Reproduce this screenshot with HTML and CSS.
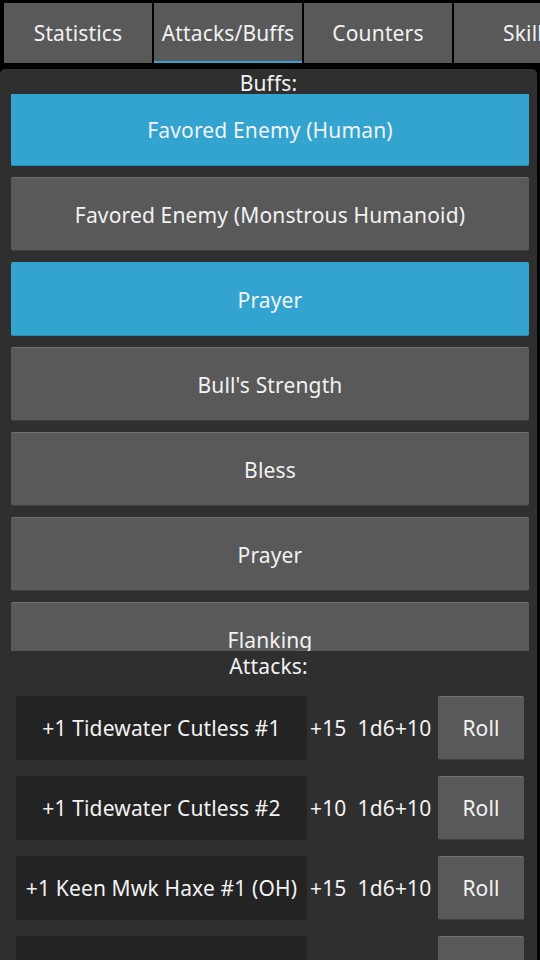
FILE: index.html
```html
<!DOCTYPE html>
<html>
<head>
<meta charset="utf-8">
<link rel="stylesheet" href="styles.css">
</head>
<body>
<div class="tabs">
  <div class="tab">Statistics</div>
  <div class="tab active">Attacks/Buffs</div>
  <div class="tab">Counters</div>
  <div class="tab">Skills</div>
</div>
<div class="panel">
  <div class="label buffs-label">Buffs:</div>
  <div class="buff-list">
    <div class="btn on">Favored Enemy (Human)</div>
    <div class="btn">Favored Enemy (Monstrous Humanoid)</div>
    <div class="btn on">Prayer</div>
    <div class="btn">Bull's Strength</div>
    <div class="btn">Bless</div>
    <div class="btn">Prayer</div>
    <div class="btn">Flanking</div>
  </div>
  <div class="label attacks-label">Attacks:</div>
  <div class="attacks">
    <div class="row">
      <div class="name">+1 Tidewater Cutless #1</div>
      <div class="bonus">+15</div>
      <div class="dmg">1d6+10</div>
      <div class="roll">Roll</div>
    </div>
    <div class="row">
      <div class="name">+1 Tidewater Cutless #2</div>
      <div class="bonus">+10</div>
      <div class="dmg">1d6+10</div>
      <div class="roll">Roll</div>
    </div>
    <div class="row">
      <div class="name">+1 Keen Mwk Haxe #1 (OH)</div>
      <div class="bonus">+15</div>
      <div class="dmg">1d6+10</div>
      <div class="roll">Roll</div>
    </div>
    <div class="row">
      <div class="name">+1 Keen Mwk Haxe #2</div>
      <div class="bonus">+10</div>
      <div class="dmg">1d6+10</div>
      <div class="roll">Roll</div>
    </div>
  </div>
</div>
</body>
</html>
```
FILE: styles.css
```css
html, body {
  margin: 0;
  padding: 0;
  background: #000;
  width: 540px;
  height: 960px;
  overflow: hidden;
  font-family: "Noto Sans", "Open Sans", sans-serif;
  color: #f2f2f2;
  letter-spacing: 0.15px;
}

.tabs {
  display: flex;
  gap: 2px;
  padding: 3px 0 0 4px;
  height: 60px;
  white-space: nowrap;
}

.tab {
  flex: 0 0 148px;
  height: 60px;
  box-sizing: border-box;
  background: #595959;
  font-size: 21px;
  display: flex;
  align-items: center;
  justify-content: center;
}

.tab.active {
  border-bottom: 2px solid #33a4d4;
  padding-top: 2px;
}

.panel {
  margin-top: 6px;
  width: 537px;
  height: 891px;
  background: #2f2f2f;
  border-radius: 5px 5px 0 0;
  overflow: hidden;
}

.label {
  font-size: 21px;
  text-align: center;
  line-height: 25px;
}

.buffs-label {
  height: 25px;
  line-height: 29px;
}

.buff-list {
  height: 557px;
  overflow: hidden;
  padding: 0 8px 0 11px;
}

.btn {
  height: 74px;
  margin-bottom: 11px;
  padding-top: 2px;
  box-sizing: border-box;
  background: #595959;
  border-top: 1px solid #707070;
  border-bottom: 1px solid #404040;
  border-radius: 2px;
  font-size: 21px;
  display: flex;
  align-items: center;
  justify-content: center;
}

.btn:first-child {
  margin-top: -2px;
}

.btn.on {
  background: #33a4d0;
  border-top-color: #33a4d0;
  border-bottom-color: #2a8cb4;
}

.attacks-label {
  height: 29px;
  line-height: 31px;
  margin-bottom: 16px;
}

.attacks {
  padding: 0 13px 0 16px;
}

.row {
  display: flex;
  align-items: center;
  height: 64px;
  margin-bottom: 16px;
  font-size: 21px;
}

.name {
  width: 291px;
  height: 64px;
  background: #232323;
  display: flex;
  align-items: center;
  justify-content: center;
  white-space: nowrap;
}

.bonus {
  margin-left: 3px;
}

.dmg {
  margin-left: 11px;
}

.roll {
  margin-left: auto;
  width: 86px;
  height: 64px;
  box-sizing: border-box;
  background: #595959;
  border-top: 1px solid #707070;
  border-bottom: 1px solid #404040;
  border-radius: 2px;
  display: flex;
  align-items: center;
  justify-content: center;
}
```
